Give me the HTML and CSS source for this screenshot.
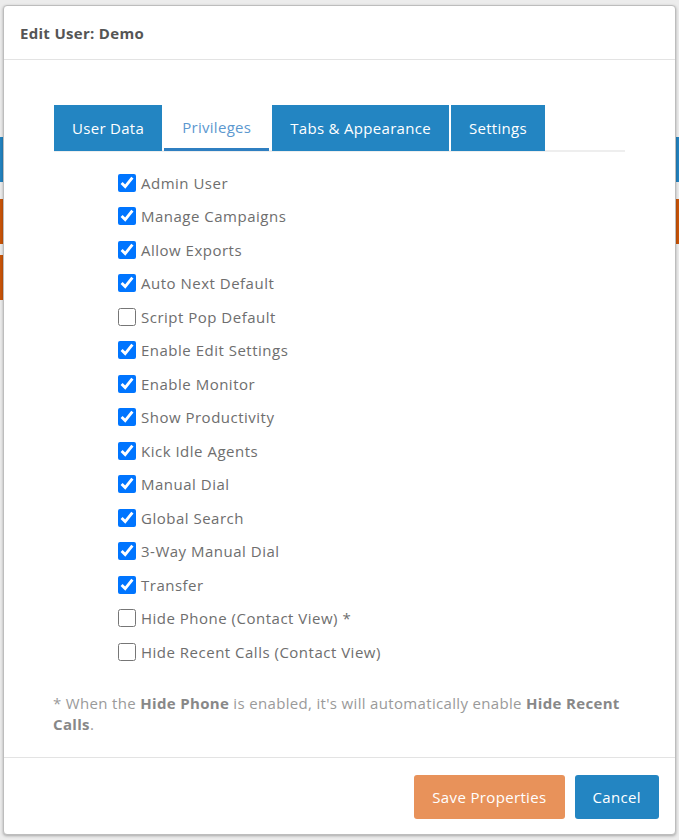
FILE: index.html
```html
<!DOCTYPE html>
<html lang="en">
<head>
  <meta charset="UTF-8">
  <title>Edit User: Demo</title>
  <link rel="stylesheet" href="styles.css">
</head>
<body>

<div class="page">
  <div class="page-bar blue"></div>
  <div class="page-bar orange"></div>
  <div class="page-bar orange short"></div>
</div>

<div class="modal">
  <div class="modal-header">
    <h4>Edit User: Demo</h4>
  </div>

  <div class="modal-body">
    <ul class="tabs">
      <li class="tab">User Data</li>
      <li class="tab active">Privileges</li>
      <li class="tab">Tabs &amp; Appearance</li>
      <li class="tab">Settings</li>
    </ul>

    <div class="priv-list">
      <label class="priv"><input type="checkbox" checked> Admin User</label>
      <label class="priv"><input type="checkbox" checked> Manage Campaigns</label>
      <label class="priv"><input type="checkbox" checked> Allow Exports</label>
      <label class="priv"><input type="checkbox" checked> Auto Next Default</label>
      <label class="priv"><input type="checkbox"> Script Pop Default</label>
      <label class="priv"><input type="checkbox" checked> Enable Edit Settings</label>
      <label class="priv"><input type="checkbox" checked> Enable Monitor</label>
      <label class="priv"><input type="checkbox" checked> Show Productivity</label>
      <label class="priv"><input type="checkbox" checked> Kick Idle Agents</label>
      <label class="priv"><input type="checkbox" checked> Manual Dial</label>
      <label class="priv"><input type="checkbox" checked> Global Search</label>
      <label class="priv"><input type="checkbox" checked> 3-Way Manual Dial</label>
      <label class="priv"><input type="checkbox" checked> Transfer</label>
      <label class="priv"><input type="checkbox"> Hide Phone (Contact View) *</label>
      <label class="priv"><input type="checkbox"> Hide Recent Calls (Contact View)</label>
    </div>

    <p class="note">* When the <b>Hide Phone</b> is enabled, it's will automatically enable <b>Hide Recent Calls</b>.</p>
  </div>

  <div class="modal-footer">
    <button class="btn btn-save">Save Properties</button>
    <button class="btn btn-cancel">Cancel</button>
  </div>
</div>

</body>
</html>
```

FILE: styles.css
```css
body {
  margin: 0;
  background-color: #ececec;
  font-family: "Open Sans", "DejaVu Sans", sans-serif;
  height: 840px;
  overflow: hidden;
}
.page {
  padding-top: 137px;
}
.page-bar {
  height: 45px;
  margin-bottom: 17px;
}
.page-bar.blue {
  background-color: #2383c0;
}
.page-bar.orange {
  background-color: #c95408;
  margin-bottom: 11px;
}
.page-bar.short {
  width: 20px;
}
.modal {
  position: absolute;
  left: 3px;
  top: 5px;
  width: 671px;
  height: 828px;
  background-color: #fff;
  border: 1px solid #bdbdbd;
  border-radius: 4px;
  box-shadow: 0 1px 3px rgba(0, 0, 0, 0.3);
  display: flex;
  flex-direction: column;
}
.modal-header {
  height: 53px;
  border-bottom: 1px solid #e3e3e3;
  display: flex;
  align-items: center;
  padding: 0 16px;
}
.modal-header h4 {
  margin: 0;
  font-size: 15px;
  font-weight: bold;
  letter-spacing: 0.3px;
  color: #555;
}
.modal-body {
  flex: 1;
  padding: 45px 50px 0 50px;
}
.tabs {
  list-style: none;
  margin: 0;
  padding: 0;
  display: flex;
  border-bottom: 2px solid #eee;
}
.tab {
  height: 46px;
  margin-bottom: -2px;
  margin-right: 2px;
  padding: 0 18px;
  display: flex;
  align-items: center;
  background-color: #2385c2;
  color: #fff;
  font-size: 15px;
  letter-spacing: 0.3px;
}
.tab.active {
  background-color: #fff;
  color: #5c98cf;
  height: 43px;
  border-bottom: 3px solid #2f7fc1;
  margin-bottom: -1px;
  margin-right: 3px;
}
.priv-list {
  display: flex;
  flex-direction: column;
  margin-top: 14px;
  padding-left: 64px;
}
.priv {
  height: 33.5px;
  display: flex;
  align-items: center;
  font-size: 15px;
  letter-spacing: 0.5px;
  color: #6e6e6e;
}
.priv input {
  width: 18px;
  height: 18px;
  margin: 0 5px 0 0;
  accent-color: #0075ff;
}
.note {
  margin: 24px 0 0 -1px;
  font-size: 15px;
  letter-spacing: 0.33px;
  line-height: 21px;
  color: #9a9a9a;
}
.note b {
  color: #888;
}
.modal-footer {
  border-top: 1px solid #e3e3e3;
  padding: 17px 16px 15px;
  display: flex;
  justify-content: flex-end;
  gap: 10px;
}
.btn {
  height: 44px;
  border: none;
  border-radius: 3px;
  padding: 0 18px;
  font-family: inherit;
  font-size: 15px;
  letter-spacing: 0.35px;
  color: #fff;
  cursor: pointer;
}
.btn-save {
  background-color: #e8925a;
}
.btn-cancel {
  background-color: #2385c2;
}
```
